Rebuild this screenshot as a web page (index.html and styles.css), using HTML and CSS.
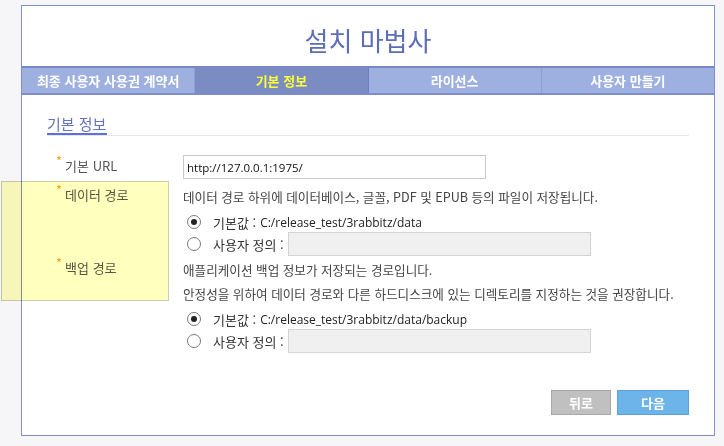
FILE: index.html
```html
<!DOCTYPE html>
<html lang="ko">
<head>
    <meta charset="UTF-8">
    <meta name="viewport" content="width=device-width, initial-scale=1.0">
    <title>설치 마법사</title>
    <link rel="stylesheet" href="styles.css">
</head>
<body>
    <div class="wizard">
        <h1 class="wizard-title">설치 마법사</h1>
        <ul class="steps">
            <li class="step">최종 사용자 사용권 계약서</li>
            <li class="step active">기본 정보</li>
            <li class="step">라이선스</li>
            <li class="step">사용자 만들기</li>
        </ul>
        <div class="content">
            <div class="section-head"><span>기본 정보</span></div>

            <div class="field field-url">
                <div class="label"><span class="req">*</span>기본 URL</div>
                <div class="value">
                    <input type="text" class="text-input" value="http://127.0.0.1:1975/">
                </div>
            </div>

            <div class="field field-data">
                <div class="label"><span class="req">*</span>데이터 경로</div>
                <div class="value">
                    <p class="desc">데이터 경로 하위에 데이터베이스, 글꼴, PDF 및 EPUB 등의 파일이 저장됩니다.</p>
                    <label class="opt opt-default">
                        <span class="radio checked"></span><span class="ko">기본값 :</span><span class="path">C:/release_test/3rabbitz/data</span>
                    </label>
                    <label class="opt opt-custom">
                        <span class="radio"></span><span class="ko">사용자 정의 :</span>
                        <input type="text" class="text-input path-input" disabled>
                    </label>
                </div>
            </div>

            <div class="field field-backup">
                <div class="label"><span class="req">*</span>백업 경로</div>
                <div class="value">
                    <p class="desc">애플리케이션 백업 정보가 저장되는 경로입니다.</p>
                    <p class="desc">안정성을 위하여 데이터 경로와 다른 하드디스크에 있는 디렉토리를 지정하는 것을 권장합니다.</p>
                    <label class="opt opt-default">
                        <span class="radio checked"></span><span class="ko">기본값 :</span><span class="path">C:/release_test/3rabbitz/data/backup</span>
                    </label>
                    <label class="opt opt-custom">
                        <span class="radio"></span><span class="ko">사용자 정의 :</span>
                        <input type="text" class="text-input path-input" disabled>
                    </label>
                </div>
            </div>

            <div class="buttons">
                <button class="btn btn-back">뒤로</button>
                <button class="btn btn-next">다음</button>
            </div>
        </div>
    </div>

    <!-- 노란색 메모 상자 -->
    <div class="note"></div>
</body>
</html>
```

FILE: styles.css
```css
body {
    font-family: "Open Sans", "Noto Sans CJK KR", sans-serif;
    font-size: 12px;
    color: #333;
    background-color: #f6f6f8;
    margin: 0;
    padding: 5px 0 0 21px;
}
.wizard {
    width: 692px;
    height: 429px;
    background: white;
    border: 1px solid #7f8ecb;
    display: flex;
    flex-direction: column;
}
.wizard-title {
    margin: 0;
    height: 60px;
    line-height: 68px;
    text-align: center;
    font-family: "Noto Sans CJK KR", sans-serif;
    font-size: 26px;
    font-weight: normal;
    color: #5d6db9;
}
.steps {
    list-style: none;
    margin: 0;
    padding: 0;
    display: flex;
    height: 25px;
    border-top: 2px solid #7788c6;
    border-bottom: 2px solid #7d8dcb;
}
.step {
    flex: 1;
    text-align: center;
    line-height: 25px;
    font-family: "Noto Sans CJK KR", sans-serif;
    font-weight: bold;
    font-size: 13px;
    color: #fff;
    background-color: #9db0e0;
    border-right: 1px solid #8f9fd6;
}
.step:last-child {
    border-right: none;
}
.step.active {
    background-color: #7b8cc3;
    color: #ffff38;
    border-right-color: #6e7fbd;
}
.content {
    flex: 1;
    padding: 0 25px;
    display: flex;
    flex-direction: column;
}
.section-head {
    margin-top: 20px;
    border-bottom: 1px solid #e4e6ee;
    height: 20px;
}
.section-head span {
    display: inline-block;
    font-family: "Noto Sans CJK KR", sans-serif;
    font-size: 15px;
    line-height: 18px;
    color: #6272c4;
    border-bottom: 2px solid #5c6fe0;
    padding-right: 1px;
}
.field {
    display: flex;
}
.label {
    width: 127px;
    padding-left: 9px;
    line-height: 24px;
    color: #555;
    font-family: "Noto Sans CJK KR", sans-serif;
    font-size: 13px;
}
.req {
    color: #f5a31a;
    font-size: 13px;
    position: relative;
    top: -5px;
    margin-right: 3px;
}
.value {
    flex: 1;
}
.field-url {
    margin-top: 19px;
}
.field-url .label {
    line-height: 22px;
}
.field-data {
    margin-top: 6px;
}
.field-data .label,
.field-backup .label {
    line-height: 20px;
}
.field-backup {
    margin-top: 2px;
}
.desc {
    margin: 0;
    line-height: 24px;
    color: #444;
    white-space: nowrap;
    font-family: "Noto Sans CJK KR", sans-serif;
    font-size: 12.6px;
}
.opt {
    display: flex;
    align-items: center;
    padding-left: 4px;
    color: #222;
}
.opt-default {
    height: 22px;
    margin-top: 2px;
}
.opt-custom {
    height: 24px;
    margin-top: -1px;
}
.ko {
    font-family: "Noto Sans CJK KR", sans-serif;
    font-size: 13px;
    color: #333;
}
.path {
    font-family: "Open Sans", sans-serif;
    font-size: 12px;
    color: #222;
    margin-left: 4px;
}
.radio {
    width: 12px;
    height: 12px;
    border: 1px solid #7a7a7a;
    border-radius: 50%;
    margin-right: 12px;
    background: white;
    position: relative;
}
.radio.checked::after {
    content: "";
    position: absolute;
    left: 3px;
    top: 3px;
    width: 6px;
    height: 6px;
    border-radius: 50%;
    background-color: #222;
}
.text-input {
    box-sizing: border-box;
    width: 303px;
    height: 24px;
    border: 1px solid #c9c9c9;
    padding: 0 3px;
    font-family: "Open Sans", sans-serif;
    font-size: 11.5px;
    color: #111;
    background: white;
}
.path-input {
    background-color: #f0f0f0;
    border-color: #d4d4d4;
    margin-left: 4px;
}
.buttons {
    margin-top: auto;
    margin-bottom: 20px;
    display: flex;
    justify-content: flex-end;
    gap: 6px;
}
.btn {
    height: 25px;
    border: 1px solid #a8a8a8;
    font-family: "Noto Sans CJK KR", sans-serif;
    font-weight: bold;
    font-size: 13px;
    color: white;
    cursor: pointer;
}
.btn-back {
    width: 60px;
    background-color: #c0c0c0;
}
.btn-next {
    width: 72px;
    background-color: #6db5e9;
    border-color: #5a9fe0;
}
.note {
    position: absolute;
    left: 1px;
    top: 181px;
    width: 166px;
    height: 118px;
    background-color: #ffffbe;
    border: 1px solid #cdcdb0;
    mix-blend-mode: multiply;
}
```
